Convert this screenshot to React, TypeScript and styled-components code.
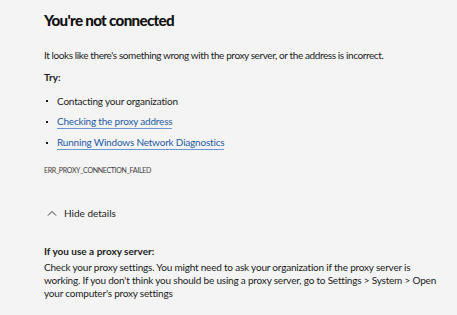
import styled, { createGlobalStyle } from "styled-components";

const GlobalStyle = createGlobalStyle`
  html, body {
    margin: 0;
    padding: 0;
    background: #f4f4f4;
  }
  body {
    font-family: Lato, "Liberation Sans", sans-serif;
    color: #1b1b1b;
  }
`;

const Page = styled.main`
  width: 457px;
  height: 315px;
  overflow: hidden;
  padding: 9px 0 0 44px;
  box-sizing: border-box;
  font-size: 10px;
  letter-spacing: -0.2px;
`;

const Title = styled.h1`
  margin: 0;
  font-size: 15.2px;
  line-height: 22px;
  font-weight: 900;
  letter-spacing: -0.7px;
  color: #111;
`;

const Text = styled.p`
  margin: 17px 0 0;
  line-height: 14px;
  letter-spacing: -0.4px;
`;

const Heading = styled.div<{ $top: number }>`
  margin-top: ${({ $top }) => $top}px;
  line-height: 14px;
  font-weight: 700;
  letter-spacing: 0;
`;

const List = styled.ul`
  list-style: none;
  margin: 10px 0 0;
  padding: 0;
  display: flex;
  flex-direction: column;
  gap: 7px;
`;

const Item = styled.li`
  display: flex;
  align-items: center;
  line-height: 14px;
  &::before {
    content: "";
    width: 2px;
    height: 2px;
    background: #1b1b1b;
    margin: 0 9px 0 2px;
  }
`;

const Link = styled.a`
  color: #1f5aa6;
  text-decoration: none;
  border-bottom: 1px solid #6a98d2;
  line-height: 13px;
`;

const Code = styled.div`
  margin-top: 15px;
  font-size: 7px;
  line-height: 10px;
  letter-spacing: -0.3px;
  color: #3c3c3c;
`;

const Toggle = styled.button`
  margin-top: 31px;
  display: flex;
  align-items: center;
  gap: 7px;
  background: none;
  border: none;
  padding: 0 0 0 3px;
  font: inherit;
  line-height: 14px;
  color: #1b1b1b;
`;

const Paragraph = styled.p`
  margin: 3px 0 0;
  line-height: 13px;
`;

const Caret = () => (
  <svg width="10" height="6" viewBox="0 0 10 6" fill="none">
    <path d="M1 5.5 L5 1.5 L9 5.5" stroke="#333" strokeWidth="1" />
  </svg>
);

export default function App() {
  return (
    <>
      <GlobalStyle />
      <Page>
        <Title>You're not connected</Title>
        <Text>
          It looks like there's something wrong with the proxy server, or the
          address is incorrect.
        </Text>
        <Heading $top={8}>Try:</Heading>
        <List>
          <Item>Contacting your organization</Item>
          <Item>
            <Link href="#">Checking the proxy address</Link>
          </Item>
          <Item>
            <Link href="#">Running Windows Network Diagnostics</Link>
          </Item>
        </List>
        <Code>ERR_PROXY_CONNECTION_FAILED</Code>
        <Toggle>
          <Caret />
          Hide details
        </Toggle>
        <Heading $top={24}>If you use a proxy server:</Heading>
        <Paragraph>
          Check your proxy settings. You might need to ask your organization if
          the proxy server is
          <br />
          working. If you don't think you should be using a proxy server, go to
          Settings &gt; System &gt; Open
          <br />
          your computer's proxy settings
        </Paragraph>
      </Page>
    </>
  );
}
